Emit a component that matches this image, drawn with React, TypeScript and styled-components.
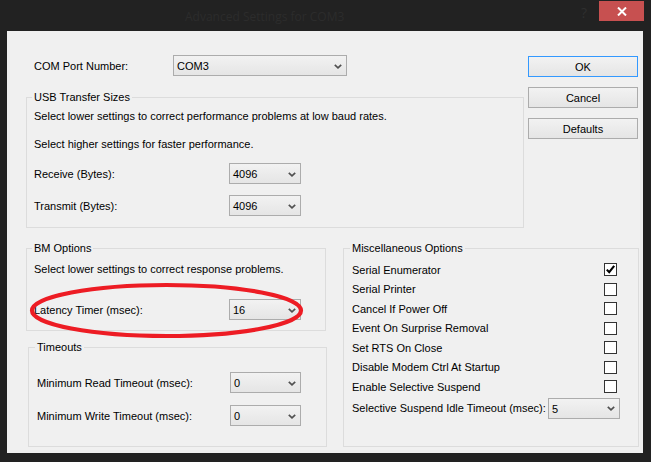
import React from 'react'
import styled, {createGlobalStyle, css} from 'styled-components'

const GlobalStyle = createGlobalStyle`
  html, body {
    margin: 0;
    padding: 0;
    background: #222222;
  }
  body {
    font-family: 'Liberation Sans', Arial, sans-serif;
    font-size: 11px;
    color: #000;
  }
`

const miscOptions = [
  {label: 'Serial Enumerator', checked: true},
  {label: 'Serial Printer', checked: false},
  {label: 'Cancel If Power Off', checked: false},
  {label: 'Event On Surprise Removal', checked: false},
  {label: 'Set RTS On Close', checked: false},
  {label: 'Disable Modem Ctrl At Startup', checked: false},
  {label: 'Enable Selective Suspend', checked: false},
]

function Chevron() {
  return (
    <svg width="8" height="5" viewBox="0 0 8 5">
      <path d="M0.8 0.8 L4 3.8 L7.2 0.8" fill="none" stroke="#505050" strokeWidth="1.7" />
    </svg>
  )
}

function Dropdown({value, width}: {value: string; width: number}) {
  return (
    <Select $width={width}>
      <span>{value}</span>
      <Chevron />
    </Select>
  )
}

function CheckBox({checked}: {checked: boolean}) {
  return (
    <Box>
      {checked && (
        <svg width="11" height="11" viewBox="0 0 11 11">
          <path d="M1.8 5.6 L4.2 8.2 L9.2 1.8" fill="none" stroke="#000" strokeWidth="2.1" />
        </svg>
      )}
    </Box>
  )
}

export default function App() {
  return (
    <>
      <GlobalStyle />
      <Window>
        <TitleBar>
          <Title>Advanced Settings for COM3</Title>
          <Help>?</Help>
          <CloseButton>
            <svg width="10" height="9" viewBox="0 0 10 9">
              <path d="M1 0.5 L9 8.5 M9 0.5 L1 8.5" stroke="#fff" strokeWidth="2" />
            </svg>
          </CloseButton>
        </TitleBar>

        <Client>
          <TopArea>
            <TopLeft>
              <ComRow>
                <Label $width={139}>COM Port Number:</Label>
                <Dropdown value="COM3" width={174} />
              </ComRow>

              <Group $pad="5px 7px 11px" $mt={14}>
                <Legend>USB Transfer Sizes</Legend>
                <Para>Select lower settings to correct performance problems at low baud rates.</Para>
                <Para $mt={14}>Select higher settings for faster performance.</Para>
                <Row $mt={12}>
                  <Label $width={195}>Receive (Bytes):</Label>
                  <Dropdown value="4096" width={72} />
                </Row>
                <Row $mt={11}>
                  <Label $width={195}>Transmit (Bytes):</Label>
                  <Dropdown value="4096" width={72} />
                </Row>
              </Group>
            </TopLeft>

            <ButtonColumn>
              <Button $focused>OK</Button>
              <Button>Cancel</Button>
              <Button>Defaults</Button>
            </ButtonColumn>
          </TopArea>

          <BottomArea>
            <LeftStack>
              <Group $pad="7px 7px 10px" $width={300}>
                <Legend>BM Options</Legend>
                <Para>Select lower settings to correct response problems.</Para>
                <Row $mt={23}>
                  <Label $width={195}>Latency Timer (msec):</Label>
                  <Dropdown value="16" width={72} />
                </Row>
              </Group>

              <Group $pad="18px 8px 20px" $width={299} $mt={9} $ml={2}>
                <Legend>Timeouts</Legend>
                <Row>
                  <Label $width={193}>Minimum Read Timeout (msec):</Label>
                  <Dropdown value="0" width={71} />
                </Row>
                <Row $mt={12}>
                  <Label $width={193}>Minimum Write Timeout (msec):</Label>
                  <Dropdown value="0" width={71} />
                </Row>
              </Group>
            </LeftStack>

            <Group $pad="5px 21px 0 8px" $width={296} $ml={16}>
              <Legend>Miscellaneous Options</Legend>
              {miscOptions.map((opt) => (
                <OptionRow key={opt.label}>
                  <span>{opt.label}</span>
                  <CheckBox checked={opt.checked} />
                </OptionRow>
              ))}
              <Row $mt={1}>
                <span>Selective Suspend Idle Timeout (msec):</span>
                <SuspendSelect>
                  <Dropdown value="5" width={72} />
                </SuspendSelect>
              </Row>
            </Group>
          </BottomArea>

          <Annotation width="282" height="64" viewBox="0 0 282 64">
            <ellipse cx="139.5" cy="31.5" rx="134.5" ry="25.5" fill="none" stroke="#ed1c24" strokeWidth="4.2" />
          </Annotation>
        </Client>
      </Window>
    </>
  )
}

const Window = styled.div`
  width: 651px;
  height: 462px;
  display: flex;
  flex-direction: column;
  background: #222222;
`

const TitleBar = styled.div`
  height: 31px;
  display: flex;
  align-items: flex-start;
`

const Title = styled.div`
  margin-left: 185px;
  margin-top: 8px;
  font-family: 'Open Sans', 'Liberation Sans', sans-serif;
  font-size: 12px;
  color: #2c2c2c;
  white-space: nowrap;
`

const Help = styled.div`
  margin-left: auto;
  margin-top: 3px;
  font-family: 'Open Sans', 'Liberation Sans', sans-serif;
  font-size: 14px;
  color: #2f2f2f;
`

const CloseButton = styled.div`
  width: 45px;
  height: 20px;
  margin: 1px 7px 0 12px;
  background: #c75050;
  display: flex;
  align-items: center;
  justify-content: center;
`

const Client = styled.div`
  position: relative;
  height: 422px;
  margin: 0 8px 9px 7px;
  padding: 24px 0 0 19px;
  box-sizing: border-box;
  background: #f0f0f0;
`

const TopArea = styled.div`
  display: flex;
  align-items: flex-start;
`

const TopLeft = styled.div`
  width: 498px;
  display: flex;
  flex-direction: column;
`

const ComRow = styled.div`
  display: flex;
  align-items: center;
  height: 21px;
  padding-left: 8px;
`

const Label = styled.span<{$width: number}>`
  width: ${(p) => p.$width}px;
  flex-shrink: 0;
  white-space: nowrap;
`

const Select = styled.div<{$width: number}>`
  width: ${(p) => p.$width}px;
  height: 21px;
  box-sizing: border-box;
  border: 1px solid #acacac;
  background: linear-gradient(#f2f2f2, #e5e5e5);
  display: flex;
  align-items: center;
  justify-content: space-between;
  padding: 1px 4px 0 3px;
  flex-shrink: 0;
`

const Group = styled.fieldset<{$pad: string; $width?: number; $mt?: number; $ml?: number}>`
  margin: ${(p) => p.$mt || 0}px 0 0 ${(p) => p.$ml || 0}px;
  padding: ${(p) => p.$pad};
  border: 1px solid #dcdcdc;
  min-width: 0;
  box-sizing: border-box;
  display: flex;
  flex-direction: column;
  ${(p) =>
    p.$width &&
    css`
      width: ${p.$width}px;
    `}
`

const Legend = styled.legend`
  padding: 0 2px;
  margin-left: -2px;
  line-height: 14px;
`

const Para = styled.div<{$mt?: number}>`
  margin-top: ${(p) => p.$mt || 0}px;
  line-height: 14px;
  white-space: nowrap;
`

const Row = styled.div<{$mt?: number}>`
  margin-top: ${(p) => p.$mt || 0}px;
  height: 21px;
  display: flex;
  align-items: center;
  white-space: nowrap;
`

const ButtonColumn = styled.div`
  width: 110px;
  margin-left: 4px;
  padding-top: 1px;
  display: flex;
  flex-direction: column;
  gap: 10px;
`

const Button = styled.div<{$focused?: boolean}>`
  height: 21px;
  box-sizing: border-box;
  border: 1px solid ${(p) => (p.$focused ? '#3399ff' : '#acacac')};
  background: linear-gradient(#f2f2f2, #e5e5e5);
  display: flex;
  align-items: center;
  justify-content: center;
`

const BottomArea = styled.div`
  display: flex;
  margin-top: 13px;
`

const LeftStack = styled.div`
  width: 301px;
  display: flex;
  flex-direction: column;
`

const OptionRow = styled.div`
  height: 19.5px;
  display: flex;
  align-items: center;
  justify-content: space-between;
  white-space: nowrap;
`

const Box = styled.div`
  width: 13px;
  height: 13px;
  box-sizing: border-box;
  border: 1px solid #333;
  background: #fff;
  display: flex;
  align-items: center;
  justify-content: center;
`

const SuspendSelect = styled.div`
  margin-left: auto;
  margin-right: -3px;
`

const Annotation = styled.svg`
  position: absolute;
  left: 20px;
  top: 248px;
  pointer-events: none;
`
